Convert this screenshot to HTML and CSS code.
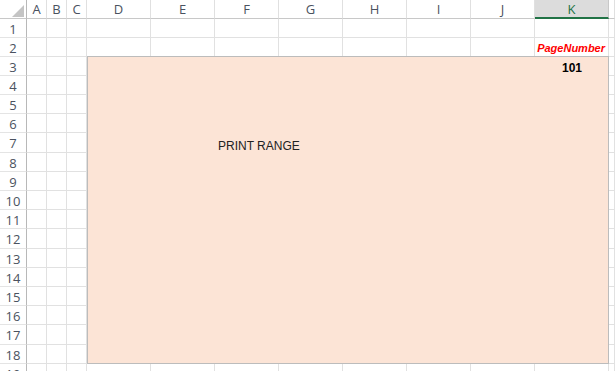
FILE: index.html
```html
<!DOCTYPE html>
<html>
<head>
<title>Print range</title>
<link rel="stylesheet" href="styles.css">
</head>
<body>
<div class="sheet">
<!-- column headers -->
<div class="corner"><svg width="27" height="19" viewBox="0 0 27 19"><polygon points="24,5 24,17 12,17" fill="#c4c4c4"/></svg></div>
<div class="colhead">A</div><div class="colhead">B</div><div class="colhead">C</div>
<div class="colhead">D</div><div class="colhead">E</div><div class="colhead">F</div>
<div class="colhead">G</div><div class="colhead">H</div><div class="colhead">I</div>
<div class="colhead">J</div><div class="colhead sel">K</div><div class="colhead"></div>

<!-- row 1 -->
<div class="rowhead">1</div>
<div class="cell"></div><div class="cell"></div><div class="cell"></div>
<div class="cell"></div><div class="cell"></div><div class="cell"></div><div class="cell"></div>
<div class="cell"></div><div class="cell"></div><div class="cell"></div><div class="cell"></div>
<div class="cell"></div>

<!-- row 2 -->
<div class="rowhead">2</div>
<div class="cell"></div><div class="cell"></div><div class="cell"></div>
<div class="cell"></div><div class="cell"></div><div class="cell"></div><div class="cell"></div>
<div class="cell"></div><div class="cell"></div><div class="cell"></div>
<div class="cell page-label">PageNumber</div>
<div class="cell"></div>

<!-- rows 3 - 18: print range covers D..K -->
<div class="range">
  <div class="page-no">101</div>
  <div class="range-title">PRINT RANGE</div>
</div>

<div class="rowhead">3</div><div class="cell"></div><div class="cell"></div><div class="cell"></div><div class="cell"></div>
<div class="rowhead">4</div><div class="cell"></div><div class="cell"></div><div class="cell"></div><div class="cell"></div>
<div class="rowhead">5</div><div class="cell"></div><div class="cell"></div><div class="cell"></div><div class="cell"></div>
<div class="rowhead">6</div><div class="cell"></div><div class="cell"></div><div class="cell"></div><div class="cell"></div>
<div class="rowhead">7</div><div class="cell"></div><div class="cell"></div><div class="cell"></div><div class="cell"></div>
<div class="rowhead">8</div><div class="cell"></div><div class="cell"></div><div class="cell"></div><div class="cell"></div>
<div class="rowhead">9</div><div class="cell"></div><div class="cell"></div><div class="cell"></div><div class="cell"></div>
<div class="rowhead">10</div><div class="cell"></div><div class="cell"></div><div class="cell"></div><div class="cell"></div>
<div class="rowhead">11</div><div class="cell"></div><div class="cell"></div><div class="cell"></div><div class="cell"></div>
<div class="rowhead">12</div><div class="cell"></div><div class="cell"></div><div class="cell"></div><div class="cell"></div>
<div class="rowhead">13</div><div class="cell"></div><div class="cell"></div><div class="cell"></div><div class="cell"></div>
<div class="rowhead">14</div><div class="cell"></div><div class="cell"></div><div class="cell"></div><div class="cell"></div>
<div class="rowhead">15</div><div class="cell"></div><div class="cell"></div><div class="cell"></div><div class="cell"></div>
<div class="rowhead">16</div><div class="cell"></div><div class="cell"></div><div class="cell"></div><div class="cell"></div>
<div class="rowhead">17</div><div class="cell"></div><div class="cell"></div><div class="cell"></div><div class="cell"></div>
<div class="rowhead">18</div><div class="cell"></div><div class="cell"></div><div class="cell"></div><div class="cell"></div>

<!-- row 19 (cut off) -->
<div class="rowhead">19</div>
<div class="cell"></div><div class="cell"></div><div class="cell"></div>
<div class="cell"></div><div class="cell"></div><div class="cell"></div><div class="cell"></div>
<div class="cell"></div><div class="cell"></div><div class="cell"></div><div class="cell"></div>
<div class="cell"></div>
</div>
</body>
</html>
```

FILE: styles.css
```css
/* Spreadsheet view with a shaded print range */

html, body
{ margin: 0;
padding: 0;
height: 371px;
overflow: hidden;
background: #ffffff;
}

div.sheet
{ display: grid;
grid-template-columns: 27px 20px 20px 20px repeat(7, 64px) 74px 1fr;
grid-template-rows: 19px 19px 19px
  19px 19px 19px 19px 20px 19px 19px 19px 19px 20px 19px 19px 19px 19px 20px 19px
  19px;
font-family: "Open Sans", "Noto Sans", sans-serif;
}

div.corner
{ border-right: 1px solid #b8b8b8;
border-bottom: 1px solid #c8c8c8;
box-sizing: border-box;
}

div.corner svg
{ display: block;
}

div.colhead
{ box-sizing: border-box;
border-right: 1px solid #e0e0e0;
border-bottom: 1px solid #c8c8c8;
color: #4a5260;
font-size: 13px;
line-height: 18px;
text-align: center;
}

div.colhead.sel
{ background: #dcdcdc;
color: #217346;
border-right: 1px solid #c8c8c8;
border-bottom: 2px solid #217346;
}

div.rowhead
{ box-sizing: border-box;
border-right: 1px solid #b8b8b8;
border-bottom: 1px solid #e4e4e4;
color: #4a5260;
font-size: 13px;
line-height: 18px;
padding-top: 1px;
text-align: center;
}

div.cell
{ box-sizing: border-box;
border-right: 1px solid #e1e1e1;
border-bottom: 1px solid #e1e1e1;
}

div.page-label
{ color: #ff0000;
font-family: "Liberation Sans", Arial, sans-serif;
font-weight: bold;
font-style: italic;
font-size: 11px;
line-height: 17px;
padding-top: 2px;
text-align: right;
padding-right: 3px;
overflow: visible;
white-space: nowrap;
}

div.range
{ grid-column: 5 / 13;
grid-row: 4 / 20;
box-sizing: border-box;
background: #fce4d6;
border: 1px solid #bcbcbc;
margin-top: -1px;
display: grid;
grid-template-columns: repeat(7, 64px) 1fr;
grid-template-rows: 19px 19px 19px 19px 20px;
font-family: "Liberation Sans", Arial, sans-serif;
}

div.page-no
{ grid-column: 8;
grid-row: 1;
font-weight: bold;
font-size: 12px;
line-height: 18px;
padding-top: 2px;
text-align: center;
color: #000000;
}

div.range-title
{ grid-column: 3;
grid-row: 5;
font-size: 12px;
line-height: 20px;
padding-top: 3px;
padding-left: 2px;
white-space: nowrap;
color: #222222;
}
```
